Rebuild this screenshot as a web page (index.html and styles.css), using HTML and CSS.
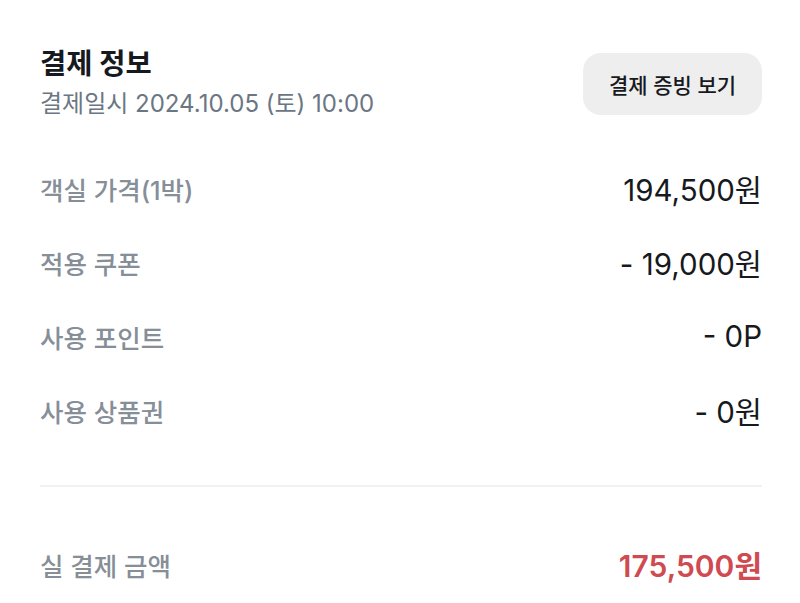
FILE: index.html
```html
<!DOCTYPE html>
<html lang="ko">
<head>
<meta charset="utf-8">
<link rel="stylesheet" href="styles.css">
</head>
<body>
<div class="page">
  <div class="header">
    <div class="titles">
      <div class="title">결제 정보</div>
      <div class="subtitle">결제일시 2024.10.05 (토) 10:00</div>
    </div>
    <button class="receipt">결제 증빙 보기</button>
  </div>
  <div class="rows">
    <div class="row"><span class="label">객실 가격(1박)</span><span class="value">194,500원</span></div>
    <div class="row"><span class="label">적용 쿠폰</span><span class="value">- 19,000원</span></div>
    <div class="row"><span class="label">사용 포인트</span><span class="value">- 0P</span></div>
    <div class="row"><span class="label">사용 상품권</span><span class="value">- 0원</span></div>
  </div>
  <div class="divider"></div>
  <div class="row total"><span class="label">실 결제 금액</span><span class="value">175,500원</span></div>
</div>
</body>
</html>
```
FILE: styles.css
```css
html, body {
  margin: 0;
  padding: 0;
  background: #ffffff;
}
body {
  font-family: "Inter", "Noto Sans CJK KR", "Noto Sans", sans-serif;
  width: 800px;
  height: 603px;
  overflow: hidden;
}
.page {
  padding: 40px 38px 0 40px;
}
.header {
  display: flex;
  justify-content: space-between;
  align-items: flex-start;
}
.title {
  font-size: 28.5px;
  font-weight: 700;
  color: #16191d;
  line-height: 40px;
  margin-top: 4px;
}
.subtitle {
  font-size: 24px;
  color: #6b7684;
  line-height: 32px;
  margin-top: 4px;
}
.receipt {
  margin-top: 13px;
  width: 179px;
  height: 62px;
  border: none;
  border-radius: 18px;
  background: #eeeeee;
  font-family: inherit;
  font-size: 21px;
  font-weight: 500;
  color: #16191d;
  padding: 0;
}
.rows {
  margin-top: 31px;
}
.row {
  display: flex;
  justify-content: space-between;
  align-items: center;
  height: 74px;
}
.label {
  font-size: 25.5px;
  color: #868e98;
  font-weight: 500;
}
.value {
  font-size: 29.5px;
  color: #16191d;
}
.divider {
  height: 2px;
  background: #f0f1f3;
  margin-top: 38px;
}
.total {
  margin-top: 40px;
}
.total .value {
  font-size: 30px;
  color: #cf4a51;
  font-weight: 600;
}
```
